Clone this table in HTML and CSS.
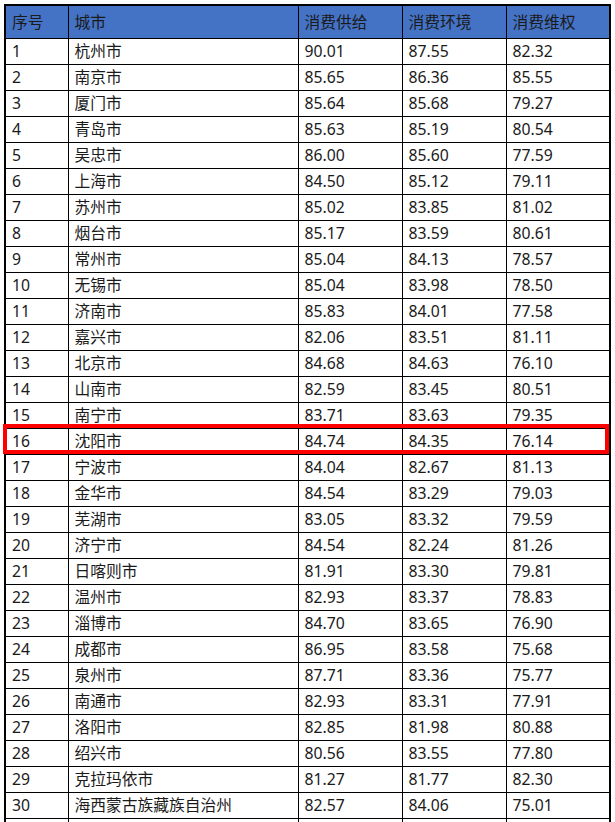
FILE: index.html
```html
<!DOCTYPE html>
<html lang="zh-CN">
<head>
<meta charset="utf-8">
<title>消费城市排名</title>
<link rel="stylesheet" href="styles.css">
</head>
<body>
<div class="wrap">
<table class="rank">
<colgroup>
<col class="c-no"><col class="c-city"><col class="c-num"><col class="c-num"><col class="c-num">
</colgroup>
<thead>
<tr><th>序号</th><th>城市</th><th>消费供给</th><th>消费环境</th><th>消费维权</th></tr>
</thead>
<tbody>
<tr><td>1</td><td>杭州市</td><td>90.01</td><td>87.55</td><td>82.32</td></tr>
<tr><td>2</td><td>南京市</td><td>85.65</td><td>86.36</td><td>85.55</td></tr>
<tr><td>3</td><td>厦门市</td><td>85.64</td><td>85.68</td><td>79.27</td></tr>
<tr><td>4</td><td>青岛市</td><td>85.63</td><td>85.19</td><td>80.54</td></tr>
<tr><td>5</td><td>吴忠市</td><td>86.00</td><td>85.60</td><td>77.59</td></tr>
<tr><td>6</td><td>上海市</td><td>84.50</td><td>85.12</td><td>79.11</td></tr>
<tr><td>7</td><td>苏州市</td><td>85.02</td><td>83.85</td><td>81.02</td></tr>
<tr><td>8</td><td>烟台市</td><td>85.17</td><td>83.59</td><td>80.61</td></tr>
<tr><td>9</td><td>常州市</td><td>85.04</td><td>84.13</td><td>78.57</td></tr>
<tr><td>10</td><td>无锡市</td><td>85.04</td><td>83.98</td><td>78.50</td></tr>
<tr><td>11</td><td>济南市</td><td>85.83</td><td>84.01</td><td>77.58</td></tr>
<tr><td>12</td><td>嘉兴市</td><td>82.06</td><td>83.51</td><td>81.11</td></tr>
<tr><td>13</td><td>北京市</td><td>84.68</td><td>84.63</td><td>76.10</td></tr>
<tr><td>14</td><td>山南市</td><td>82.59</td><td>83.45</td><td>80.51</td></tr>
<tr><td>15</td><td>南宁市</td><td>83.71</td><td>83.63</td><td>79.35</td></tr>
<tr><td>16</td><td>沈阳市</td><td>84.74</td><td>84.35</td><td>76.14</td></tr>
<tr><td>17</td><td>宁波市</td><td>84.04</td><td>82.67</td><td>81.13</td></tr>
<tr><td>18</td><td>金华市</td><td>84.54</td><td>83.29</td><td>79.03</td></tr>
<tr><td>19</td><td>芜湖市</td><td>83.05</td><td>83.32</td><td>79.59</td></tr>
<tr><td>20</td><td>济宁市</td><td>84.54</td><td>82.24</td><td>81.26</td></tr>
<tr><td>21</td><td>日喀则市</td><td>81.91</td><td>83.30</td><td>79.81</td></tr>
<tr><td>22</td><td>温州市</td><td>82.93</td><td>83.37</td><td>78.83</td></tr>
<tr><td>23</td><td>淄博市</td><td>84.70</td><td>83.65</td><td>76.90</td></tr>
<tr><td>24</td><td>成都市</td><td>86.95</td><td>83.58</td><td>75.68</td></tr>
<tr><td>25</td><td>泉州市</td><td>87.71</td><td>83.36</td><td>75.77</td></tr>
<tr><td>26</td><td>南通市</td><td>82.93</td><td>83.31</td><td>77.91</td></tr>
<tr><td>27</td><td>洛阳市</td><td>82.85</td><td>81.98</td><td>80.88</td></tr>
<tr><td>28</td><td>绍兴市</td><td>80.56</td><td>83.55</td><td>77.80</td></tr>
<tr><td>29</td><td>克拉玛依市</td><td>81.27</td><td>81.77</td><td>82.30</td></tr>
<tr><td>30</td><td>海西蒙古族藏族自治州</td><td>82.57</td><td>84.06</td><td>75.01</td></tr>
<tr><td>&nbsp;</td><td>&nbsp;</td><td>&nbsp;</td><td>&nbsp;</td><td>&nbsp;</td></tr>
</tbody>
</table>
<div class="highlight"></div>
</div>
</body>
</html>
```

FILE: styles.css
```css
html, body {
  margin: 0;
  padding: 0;
  background: #ffffff;
}

body {
  font-family: "Noto Sans", "Noto Sans CJK SC", sans-serif;
  color: #1a1a1a;
  font-size: 15.75px;
}

.wrap {
  position: relative;
  padding: 4px 0 0 4px;
  width: 605px;
}

.rank {
  border-collapse: collapse;
  width: 605px;
  table-layout: fixed;
  border: 2px solid #000;
}

.c-no { width: 63px; }
.c-city { width: 230px; }
.c-num { width: 104px; }

.rank th,
.rank td {
  border: 1px solid #000;
  padding: 0 0 0 6px;
  text-align: left;
  font-weight: normal;
  white-space: nowrap;
  overflow: hidden;
}

.rank th {
  background: #4472c4;
  height: 31px;
  line-height: 31px;
  padding-top: 1px;
}

.rank td {
  height: 25px;
  line-height: 25px;
}

.highlight {
  position: absolute;
  left: 3px;
  top: 424px;
  width: 598px;
  height: 22px;
  border: 4.5px solid #ff0000;
  pointer-events: none;
}
```
